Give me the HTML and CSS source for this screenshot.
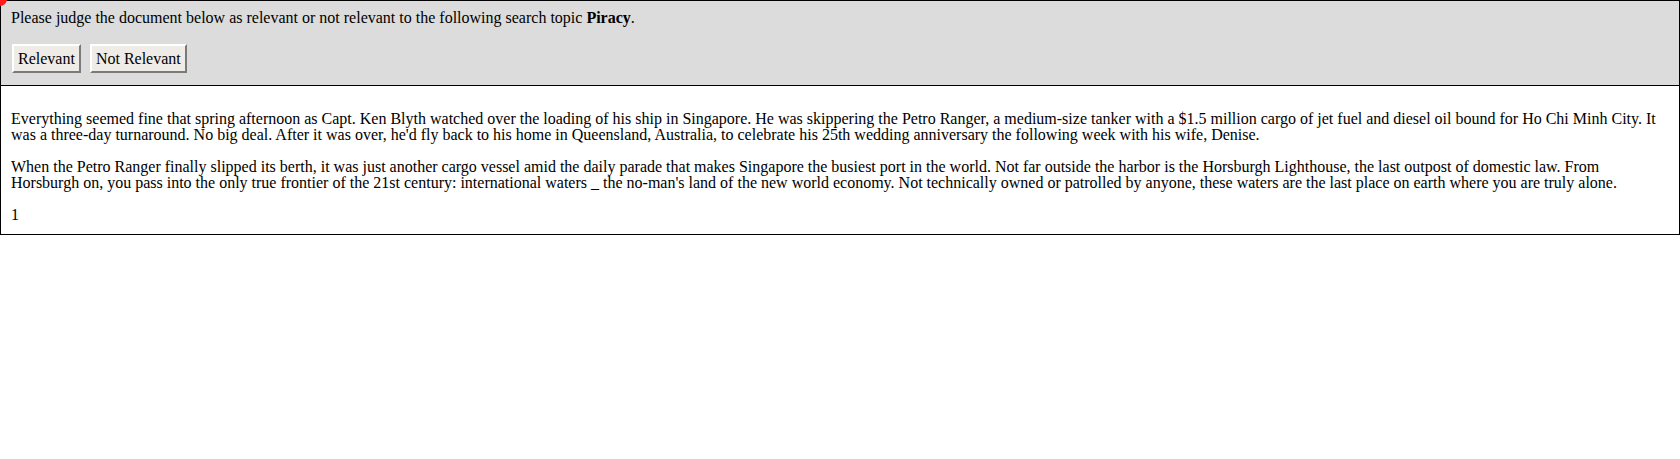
FILE: index.html
```html
<!DOCTYPE html>
<html>
<head>
<meta charset="utf-8">
<link rel="stylesheet" href="styles.css">
</head>
<body>
<div class="dot"></div>
<div class="header">
  <div class="prompt">Please judge the document below as relevant or not relevant to the following search topic <b>Piracy</b>.</div>
  <div class="buttons">
    <button class="btn">Relevant</button>
    <button class="btn">Not Relevant</button>
  </div>
</div>
<div class="doc">
  <p>Everything seemed fine that spring afternoon as Capt. Ken Blyth watched over the loading of his ship in Singapore. He was skippering the Petro Ranger, a medium-size tanker with a $1.5 million cargo of jet fuel and diesel oil bound for Ho Chi Minh City. It was a three-day turnaround. No big deal. After it was over, he'd fly back to his home in Queensland, Australia, to celebrate his 25th wedding anniversary the following week with his wife, Denise.</p>
  <p>When the Petro Ranger finally slipped its berth, it was just another cargo vessel amid the daily parade that makes Singapore the busiest port in the world. Not far outside the harbor is the Horsburgh Lighthouse, the last outpost of domestic law. From Horsburgh on, you pass into the only true frontier of the 21st century: international waters _ the no-man's land of the new world economy. Not technically owned or patrolled by anyone, these waters are the last place on earth where you are truly alone.</p>
  <div class="pagenum">1</div>
</div>
</body>
</html>
```

FILE: styles.css
```css
html, body {
  margin: 0;
  padding: 0;
  background: #ffffff;
}
body {
  font-family: "Liberation Serif", "Times New Roman", serif;
  font-size: 16px;
  color: #000;
  width: 1680px;
}
.dot {
  position: absolute;
  left: -7px;
  top: -8px;
  width: 14px;
  height: 14px;
  border-radius: 50%;
  background: #ff1a1a;
  z-index: 2;
}
.header {
  background: #dcdcdc;
  border: 1px solid #000;
  padding: 8px 10px 12px 10px;
}
.prompt {
  line-height: 18px;
}
.buttons {
  display: flex;
  gap: 9px;
  margin-top: 17px;
  padding-left: 1px;
}
.btn {
  font-family: "Liberation Serif", "Times New Roman", serif;
  font-size: 16px;
  color: #000;
  background: #efece7;
  border: 2px solid;
  border-top-color: #ffffff;
  border-left-color: #ffffff;
  border-right-color: #7a7a7a;
  border-bottom-color: #7a7a7a;
  padding: 3px 4px;
  margin: 0;
  line-height: 19px;
}
.doc {
  border: 1px solid #000;
  border-top: none;
  padding: 9px 10px 11px 10px;
}
.doc p {
  margin: 16px 0;
  line-height: 16px;
}
.pagenum {
  line-height: 16px;
}
```
